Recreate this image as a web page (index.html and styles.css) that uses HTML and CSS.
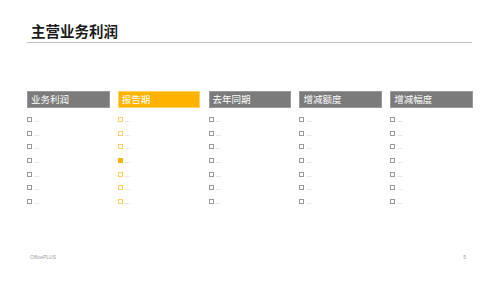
FILE: index.html
```html
<!DOCTYPE html>
<html lang="zh">
<head>
<meta charset="utf-8">
<link rel="stylesheet" href="styles.css">
</head>
<body>
<div class="slide">
  <div class="title-bar">
    <h1 class="title">主营业务利润</h1>
  </div>
  <div class="table">
    <div class="col">
      <div class="head">业务利润</div>
      <ul class="items">
        <li><span class="box"></span>...</li>
        <li><span class="box"></span>...</li>
        <li><span class="box"></span>...</li>
        <li><span class="box"></span>...</li>
        <li><span class="box"></span>...</li>
        <li><span class="box"></span>...</li>
        <li><span class="box"></span>...</li>
      </ul>
    </div>
    <div class="col accent">
      <div class="head">报告期</div>
      <ul class="items">
        <li><span class="box"></span>...</li>
        <li><span class="box"></span>...</li>
        <li><span class="box"></span>...</li>
        <li><span class="box filled"></span>...</li>
        <li><span class="box"></span>...</li>
        <li><span class="box"></span>...</li>
        <li><span class="box"></span>...</li>
      </ul>
    </div>
    <div class="col">
      <div class="head">去年同期</div>
      <ul class="items">
        <li><span class="box"></span>...</li>
        <li><span class="box"></span>...</li>
        <li><span class="box"></span>...</li>
        <li><span class="box"></span>...</li>
        <li><span class="box"></span>...</li>
        <li><span class="box"></span>...</li>
        <li><span class="box"></span>...</li>
      </ul>
    </div>
    <div class="col">
      <div class="head">增减额度</div>
      <ul class="items">
        <li><span class="box"></span>...</li>
        <li><span class="box"></span>...</li>
        <li><span class="box"></span>...</li>
        <li><span class="box"></span>...</li>
        <li><span class="box"></span>...</li>
        <li><span class="box"></span>...</li>
        <li><span class="box"></span>...</li>
      </ul>
    </div>
    <div class="col">
      <div class="head">增减幅度</div>
      <ul class="items">
        <li><span class="box"></span>...</li>
        <li><span class="box"></span>...</li>
        <li><span class="box"></span>...</li>
        <li><span class="box"></span>...</li>
        <li><span class="box"></span>...</li>
        <li><span class="box"></span>...</li>
        <li><span class="box"></span>...</li>
      </ul>
    </div>
  </div>
  <div class="footer">
    <span class="brand">OfficePLUS</span>
    <span class="page">5</span>
  </div>
</div>
</body>
</html>
```

FILE: styles.css
```css
html, body {
  margin: 0;
  padding: 0;
  background: #ffffff;
}
.slide {
  width: 500px;
  height: 281px;
  box-sizing: border-box;
  padding: 0 28px 0 27px;
  display: flex;
  flex-direction: column;
  font-family: "Noto Sans CJK SC", "Liberation Sans", sans-serif;
  overflow: hidden;
}
.title-bar {
  margin-top: 21px;
  border-bottom: 1.5px solid #c4c4c4;
  height: 20.5px;
  box-sizing: content-box;
}
.title {
  margin: 0;
  padding-left: 4px;
  font-size: 14.5px;
  line-height: 19px;
  font-weight: 700;
  color: #1c1c1c;
}
.table {
  margin-top: 48px;
  display: grid;
  grid-template-columns: repeat(5, 82.5px);
  column-gap: 8.3px;
}
.head {
  height: 17px;
  box-sizing: border-box;
  background: #7b7b7b;
  border: 1px solid #9a9a9a;
  color: #ffffff;
  font-size: 9.5px;
  line-height: 15px;
  padding-left: 3px;
}
.accent .head {
  background: #ffb300;
  border-color: #ffd35c;
}
.items {
  list-style: none;
  margin: 5.5px 0 0 0;
  padding: 0;
}
.items li {
  height: 13.6px;
  display: flex;
  align-items: center;
  gap: 2px;
  font-family: "Liberation Sans", sans-serif;
  font-size: 6.5px;
  color: #b4b4b4;
}
.box {
  width: 5px;
  height: 5px;
  box-sizing: border-box;
  border: 1px solid #9a9a9a;
  flex: none;
}
.accent .box {
  border-color: #ffcf66;
}
.accent .box.filled {
  background: #ffb300;
  border-color: #ffb300;
}
.footer {
  margin-top: auto;
  margin-bottom: 21px;
  display: flex;
  justify-content: space-between;
  padding: 0 6px 0 3px;
  font-family: "Liberation Sans", sans-serif;
  font-size: 5px;
  color: #9a9a9a;
}
```
